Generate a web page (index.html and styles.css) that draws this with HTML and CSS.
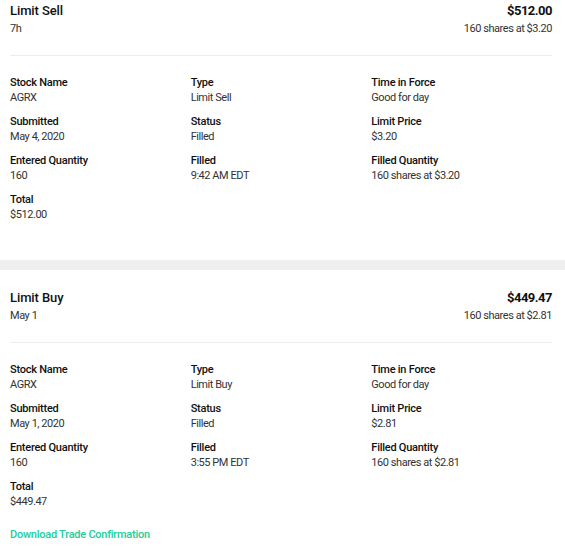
FILE: index.html
```html
<!DOCTYPE html>
<html>
<head>
<meta charset="utf-8">
<link rel="stylesheet" href="styles.css">
</head>
<body>
<section class="order order--first">
  <header class="order-head">
    <div class="head-left">
      <div class="order-title">Limit Sell</div>
      <div class="order-sub">7h</div>
    </div>
    <div class="head-right">
      <div class="order-amount">$512.00</div>
      <div class="order-sub">160 shares at $3.20</div>
    </div>
  </header>
  <div class="details">
    <div class="field"><div class="label">Stock Name</div><div class="value">AGRX</div></div>
    <div class="field"><div class="label">Type</div><div class="value">Limit Sell</div></div>
    <div class="field"><div class="label">Time in Force</div><div class="value">Good for day</div></div>
    <div class="field"><div class="label">Submitted</div><div class="value">May 4, 2020</div></div>
    <div class="field"><div class="label">Status</div><div class="value">Filled</div></div>
    <div class="field"><div class="label">Limit Price</div><div class="value">$3.20</div></div>
    <div class="field"><div class="label">Entered Quantity</div><div class="value">160</div></div>
    <div class="field"><div class="label">Filled</div><div class="value">9:42 AM EDT</div></div>
    <div class="field"><div class="label">Filled Quantity</div><div class="value">160 shares at $3.20</div></div>
    <div class="field"><div class="label">Total</div><div class="value">$512.00</div></div>
  </div>
</section>
<div class="band"></div>
<section class="order">
  <header class="order-head">
    <div class="head-left">
      <div class="order-title">Limit Buy</div>
      <div class="order-sub">May 1</div>
    </div>
    <div class="head-right">
      <div class="order-amount">$449.47</div>
      <div class="order-sub">160 shares at $2.81</div>
    </div>
  </header>
  <div class="details">
    <div class="field"><div class="label">Stock Name</div><div class="value">AGRX</div></div>
    <div class="field"><div class="label">Type</div><div class="value">Limit Buy</div></div>
    <div class="field"><div class="label">Time in Force</div><div class="value">Good for day</div></div>
    <div class="field"><div class="label">Submitted</div><div class="value">May 1, 2020</div></div>
    <div class="field"><div class="label">Status</div><div class="value">Filled</div></div>
    <div class="field"><div class="label">Limit Price</div><div class="value">$2.81</div></div>
    <div class="field"><div class="label">Entered Quantity</div><div class="value">160</div></div>
    <div class="field"><div class="label">Filled</div><div class="value">3:55 PM EDT</div></div>
    <div class="field"><div class="label">Filled Quantity</div><div class="value">160 shares at $2.81</div></div>
    <div class="field"><div class="label">Total</div><div class="value">$449.47</div></div>
  </div>
  <a class="download" href="#">Download Trade Confirmation</a>
</section>
</body>
</html>
```

FILE: styles.css
```css
* { box-sizing: border-box; }
html, body { margin: 0; padding: 0; background: #fff; }
body {
  font-family: Roboto, "Liberation Sans", sans-serif;
  color: #1b1b1d;
  width: 565px;
}
.order {
  padding: 20px 13px 0 10px;
}
.order--first {
  padding-top: 3px;
  padding-bottom: 38px;
}
.order-head {
  display: flex;
  justify-content: space-between;
  border-bottom: 1px solid #ececec;
  padding-bottom: 18px;
}
.head-right { text-align: right; }
.order-title {
  font-size: 13px;
  line-height: 16px;
  font-weight: 500;
  color: #111;
  letter-spacing: -0.1px;
}
.order-amount {
  font-size: 13px;
  line-height: 16px;
  font-weight: 700;
  color: #111;
  letter-spacing: -0.5px;
}
.order-sub {
  font-size: 11px;
  line-height: 16px;
  margin-top: 2px;
  color: #333;
  letter-spacing: -0.45px;
}
.details {
  display: grid;
  grid-template-columns: repeat(3, 1fr);
  row-gap: 9px;
  padding-top: 19px;
}
.label {
  font-size: 11px;
  line-height: 15px;
  font-weight: 500;
  color: #111;
  letter-spacing: -0.25px;
}
.value {
  font-size: 11px;
  line-height: 15px;
  color: #333;
  letter-spacing: -0.45px;
}
.band {
  height: 10px;
  background: #efefef;
}
.download {
  display: block;
  margin-top: 18px;
  font-size: 11px;
  line-height: 15px;
  font-weight: 500;
  color: #21ce99;
  text-decoration: none;
  letter-spacing: -0.25px;
}
```
